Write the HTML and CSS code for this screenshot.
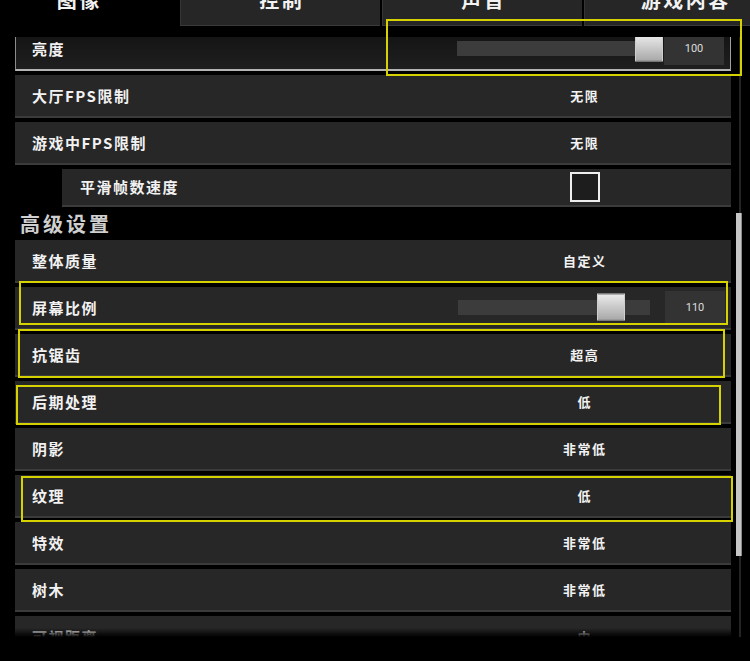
FILE: index.html
```html
<!DOCTYPE html>
<html lang="zh-CN">
<head>
    <meta charset="UTF-8">
    <meta name="viewport" content="width=device-width, initial-scale=1.0">
    <title>设置</title>
    <link rel="stylesheet" href="styles.css">
</head>
<body>

<!-- Tabs -->
<div class="tabs">
    <div class="tab active"><span>图像</span></div>
    <div class="tab"><span>控制</span></div>
    <div class="tab"><span>声音</span></div>
    <div class="tab"><span>游戏内容</span></div>
</div>

<!-- Settings list -->
<div class="viewport">
    <div class="list">
        <div class="row selected">
            <div class="label">亮度</div>
            <div class="value slider">
                <div class="track"><div class="thumb" style="left: 178px;"></div></div>
                <div class="num">100</div>
            </div>
        </div>
        <div class="row">
            <div class="label">大厅FPS限制</div>
            <div class="value">无限</div>
        </div>
        <div class="row">
            <div class="label">游戏中FPS限制</div>
            <div class="value">无限</div>
        </div>
        <div class="row sub">
            <div class="label">平滑帧数速度</div>
            <div class="value"><span class="checkbox"></span></div>
        </div>

        <h2 class="heading">高级设置</h2>

        <div class="row">
            <div class="label">整体质量</div>
            <div class="value">自定义</div>
        </div>
        <div class="row">
            <div class="label">屏幕比例</div>
            <div class="value slider">
                <div class="track"><div class="thumb" style="left: 139px;"></div></div>
                <div class="num">110</div>
            </div>
        </div>
        <div class="row">
            <div class="label">抗锯齿</div>
            <div class="value">超高</div>
        </div>
        <div class="row">
            <div class="label">后期处理</div>
            <div class="value">低</div>
        </div>
        <div class="row">
            <div class="label">阴影</div>
            <div class="value">非常低</div>
        </div>
        <div class="row">
            <div class="label">纹理</div>
            <div class="value">低</div>
        </div>
        <div class="row">
            <div class="label">特效</div>
            <div class="value">非常低</div>
        </div>
        <div class="row">
            <div class="label">树木</div>
            <div class="value">非常低</div>
        </div>
        <div class="row">
            <div class="label">可视距离</div>
            <div class="value">中</div>
        </div>
    </div>
</div>

<!-- Scrollbar -->
<div class="scrollbar"><div class="scroll-thumb"></div></div>

<!-- Focus frames -->
<div class="focus focus-brightness"></div>
<div class="focus focus-scale"></div>
<div class="focus focus-aa"></div>
<div class="focus focus-post"></div>
<div class="focus focus-texture"></div>

</body>
</html>
```

FILE: styles.css
```css
* {
    margin: 0;
    padding: 0;
    box-sizing: border-box;
}

body {
    font-family: "Noto Sans CJK SC", "Noto Sans", sans-serif;
    background-color: #000;
    color: #f2f2f2;
    width: 750px;
    height: 661px;
    overflow: hidden;
    position: relative;
}

/* Tabs along the top, text cut off by the window edge */
.tabs {
    display: flex;
    gap: 2px;
    height: 26px;
    margin-left: -22px;
    overflow: hidden;
}

.tab {
    flex: 0 0 200px;
    background-color: #262626;
    border-bottom: 1px solid #3a3a3a;
    border-left: 1px solid #363636;
    text-align: center;
}

.tab span {
    display: block;
    margin-top: -12px;
    font-size: 20px;
    line-height: 24px;
    font-weight: bold;
    letter-spacing: 2.5px;
    padding-left: 2.5px;
}

.tab.active {
    background-color: #000;
    border: none;
}

/* Scrolling list */
.viewport {
    position: relative;
    margin-top: 11px;
    height: 600px;
    overflow: hidden;
}

.viewport::after {
    content: "";
    position: absolute;
    left: 0;
    right: 0;
    bottom: 0;
    height: 9px;
    background: linear-gradient(rgba(0, 0, 0, 0), #000);
}

.list {
    margin-top: -9px;
    margin-left: 15px;
    width: 716px;
}

.row {
    display: grid;
    grid-template-columns: 1fr 294px;
    align-items: center;
    height: 43px;
    margin-bottom: 4px;
    padding-left: 17px;
    padding-bottom: 1px;
    background-color: #272727;
    border-bottom: 2px solid #3b3b3b;
}

.row.selected {
    padding-left: 16px;
    background: linear-gradient(#121212, #1f1f1f);
    border-left: 1px solid #8c8c8c;
    border-right: 1px solid #a0a0a0;
    border-bottom: 2px solid #b4b4b4;
}

.row.sub {
    height: 38px;
    margin-left: 47px;
    margin-bottom: 0;
    padding-left: 18px;
}

.label {
    font-size: 15px;
    line-height: 1;
    font-weight: bold;
    letter-spacing: 1.5px;
}

.value {
    font-size: 13px;
    line-height: 1;
    font-weight: bold;
    letter-spacing: 1.5px;
    padding-left: 1.5px;
    text-align: center;
}

.checkbox {
    display: inline-block;
    width: 30px;
    height: 30px;
    border: 2px solid #eee;
    background-color: #1d1d1d;
    vertical-align: middle;
}

/* Slider control */
.slider {
    display: flex;
    align-items: center;
    padding-left: 21px;
    text-align: left;
}

.track {
    position: relative;
    width: 192px;
    height: 15px;
    background-color: #3c3c3c;
}

.thumb {
    position: absolute;
    top: 50%;
    width: 28px;
    height: 27px;
    transform: translateY(-50%);
    border: 1px solid #cfcfcf;
    background: linear-gradient(#eaeaea, #a9a9a9);
}

.num {
    width: 60px;
    height: 33px;
    margin-left: 15px;
    background-color: #333;
    color: #ddd;
    font-family: Roboto, "Liberation Sans", sans-serif;
    font-size: 11px;
    font-weight: normal;
    letter-spacing: 0;
    line-height: 33px;
    text-align: center;
}

.heading {
    height: 33px;
    padding-left: 5px;
    font-size: 20px;
    line-height: 33px;
    font-weight: bold;
    letter-spacing: 3px;
    color: #cfcfcf;
}

/* Scrollbar at the right edge */
.scrollbar {
    position: absolute;
    left: 739px;
    top: 37px;
    width: 2px;
    height: 600px;
    background-color: #242424;
}

.scroll-thumb {
    position: absolute;
    left: -3px;
    top: 176px;
    width: 6px;
    height: 343px;
    background-color: #c6c6c6;
    border-right: 1px solid #8a8a8a;
}

/* Yellow focus frames drawn over the list */
.focus {
    position: absolute;
    border: 2px solid #d6d200;
}

.focus-brightness { left: 386px; top: 19px; width: 356px; height: 57px; }
.focus-scale { left: 19px; top: 281px; width: 709px; height: 44px; }
.focus-aa { left: 18px; top: 329px; width: 707px; height: 49px; }
.focus-post { left: 16px; top: 385px; width: 705px; height: 40px; }
.focus-texture { left: 21px; top: 476px; width: 712px; height: 46px; }
```
